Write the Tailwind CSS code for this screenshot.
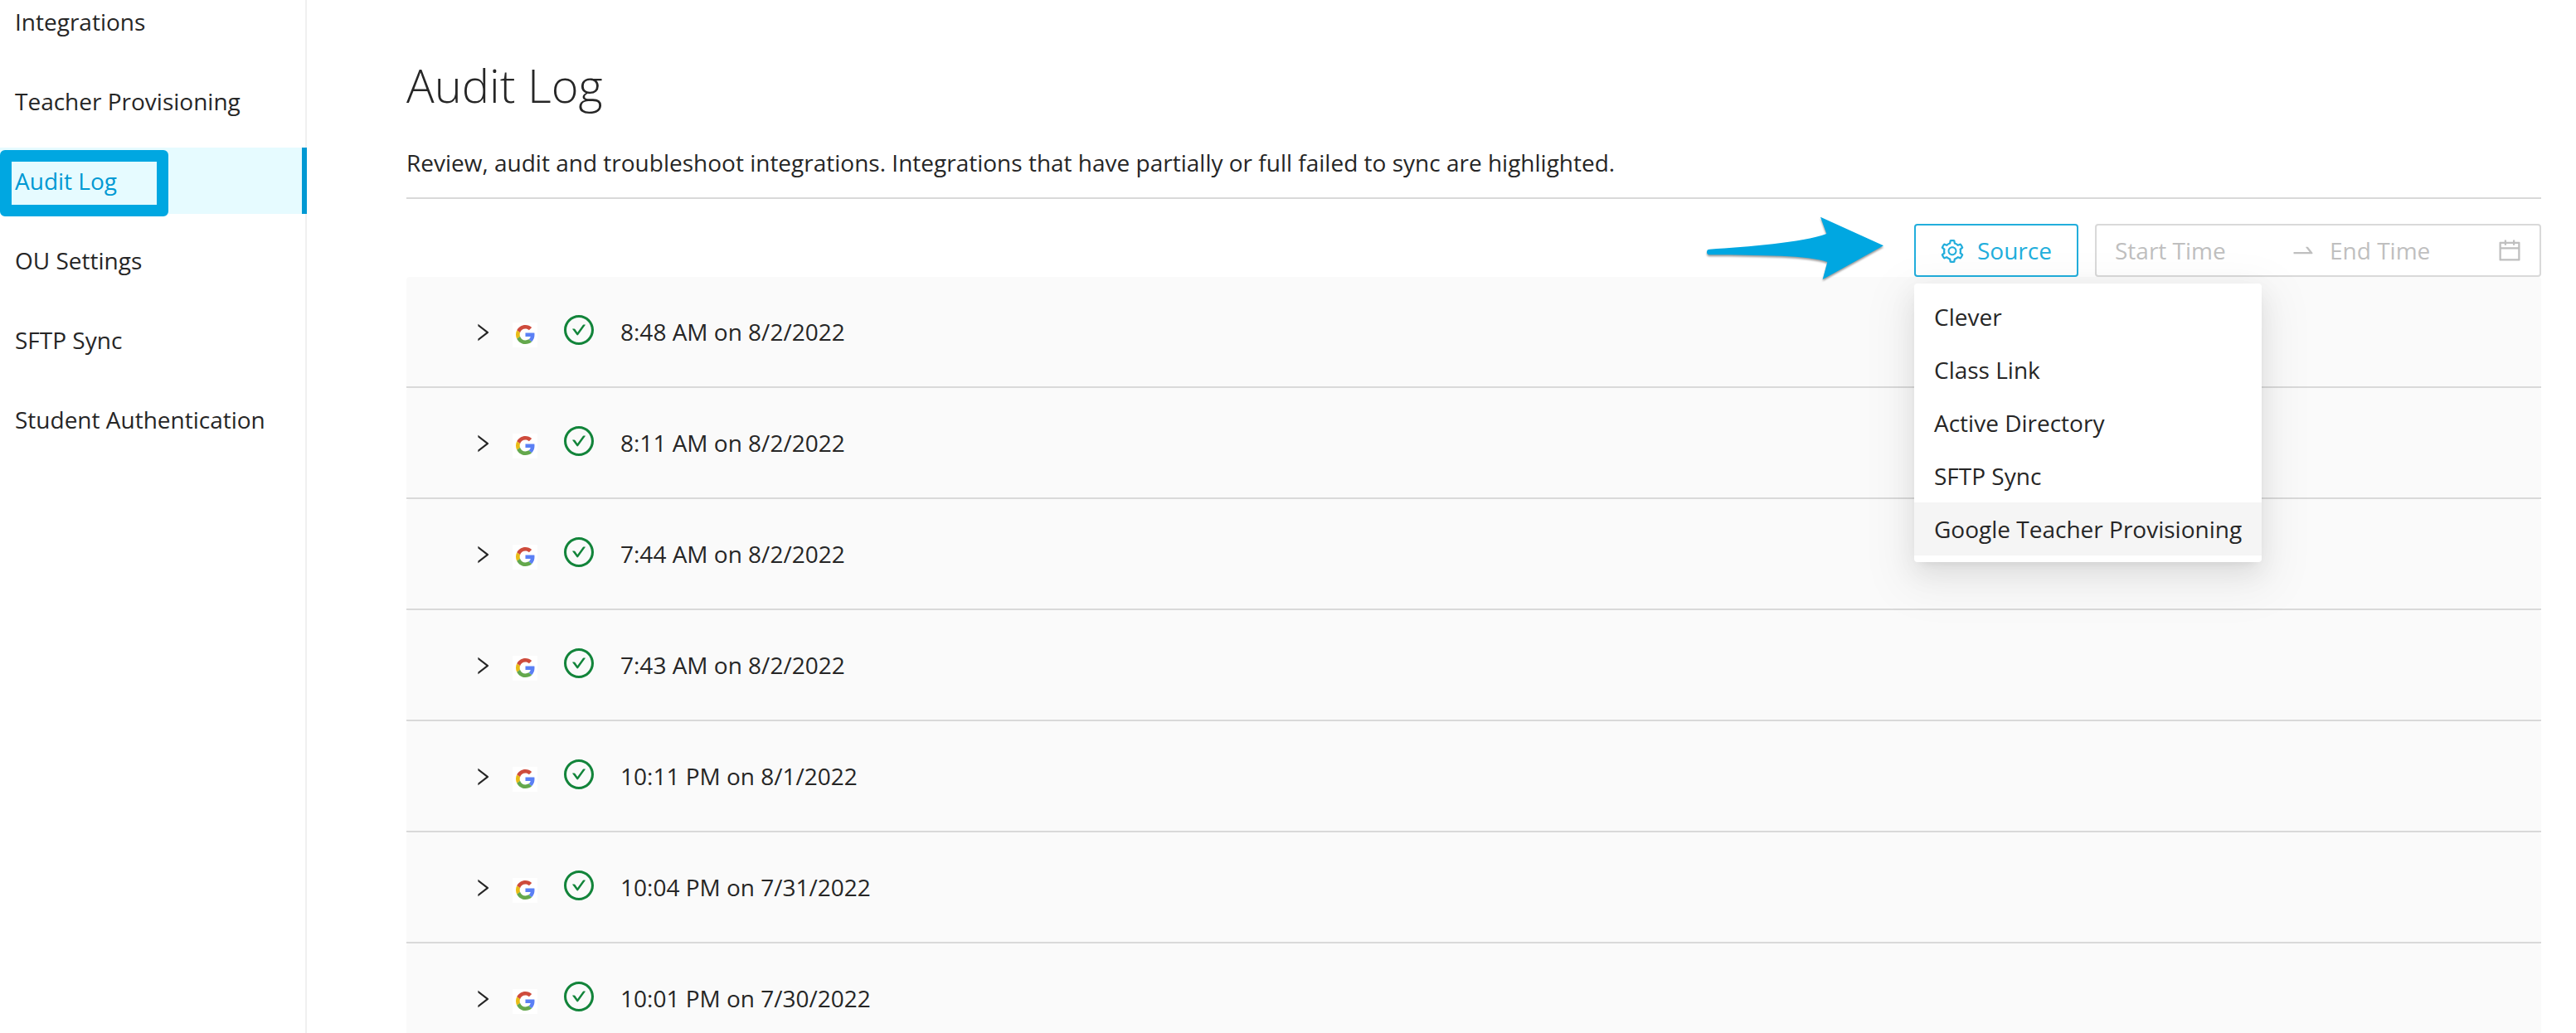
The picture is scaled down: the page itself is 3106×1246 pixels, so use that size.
<!DOCTYPE html>
<html lang="en">
<head>
  <meta charset="UTF-8" />
  <meta name="viewport" content="width=device-width, initial-scale=1.0"/>
  <title>Audit Log</title>
  <script src="https://cdn.jsdelivr.net/npm/@tailwindcss/browser@4"></script>
</head>
<body class="bg-white h-screen overflow-hidden font-['Open_Sans',sans-serif] text-[28px] leading-[44px] text-[#262626]">
  <div class="flex h-full">
    <!-- Side menu -->
    <nav class="w-[370px] shrink-0 border-r-2 border-[#f0f0f0]">
      <ul class="-mt-[14px] flex flex-col gap-4 leading-[80px] whitespace-nowrap">
        <li class="h-20 pl-[18px]">Integrations</li>
        <li class="h-20 pl-[18px]">Teacher Provisioning</li>
        <li class="relative h-20 pl-[18px] -mr-[2px] border-r-6 border-[#0099d3] bg-[#e6fbff] text-[#0099d3]">
          Audit Log
          <div class="absolute left-0 top-[3px] w-[203px] h-20 border-14 border-[#00a7e1] rounded-md"></div>
        </li>
        <li class="h-20 pl-[18px]">OU Settings</li>
        <li class="h-20 pl-[18px]">SFTP Sync</li>
        <li class="h-20 pl-[18px]">Student Authentication</li>
      </ul>
    </nav>

    <main class="flex-1 pl-[120px] pr-[42px]">
      <h1 class="pt-[66px] text-[56px] leading-[72px] font-light">Audit Log</h1>
      <p class="mt-[36px] h-[66px] border-b-2 border-[#d9d9d9]">Review, audit and troubleshoot integrations. Integrations that have partially or full failed to sync are highlighted.</p>

      <!-- Filters -->
      <div class="relative mt-[30px] flex justify-end gap-5">
        <svg class="absolute left-[1560px] -top-[15px] z-20 drop-shadow-[0_2px_1px_rgba(0,0,0,0.4)]" width="230" height="90" viewBox="30 75 690 270" fill="#00a7e1">
          <path d="M64 212C200 203 400 188 487 156L465 95L693 199L473 321L490 258C420 234 260 234 64 232A10 10 0 0 1 64 212Z"/>
        </svg>
        <div class="relative">
          <button class="flex items-center w-[198px] h-16 pl-[30px] border-2 border-[#22aedc] rounded text-[#22aedc]">
            <svg class="mt-[2px] mr-4" width="28" height="28" viewBox="64 64 896 896" fill="currentColor">
              <path d="M924.8 625.7l-65.5-56c3.1-19 4.7-38.4 4.7-57.8s-1.6-38.8-4.7-57.8l65.5-56a32.03 32.03 0 009.3-35.2l-.9-2.6a443.74 443.74 0 00-79.7-137.9l-1.8-2.1a32.12 32.12 0 00-35.1-9.5l-81.3 28.9c-30-24.6-63.5-44-99.7-57.6l-15.7-85a32.05 32.05 0 00-25.8-25.7l-2.7-.5c-52.1-9.4-106.9-9.4-159 0l-2.7.5a32.05 32.05 0 00-25.8 25.7l-15.8 85.4a351.86 351.86 0 00-99 57.4l-81.9-29.1a32 32 0 00-35.1 9.5l-1.8 2.1a446.02 446.02 0 00-79.7 137.9l-.9 2.6c-4.5 12.5-.8 26.5 9.3 35.2l66.3 56.6c-3.1 18.8-4.6 38-4.6 57.1 0 19.2 1.5 38.4 4.6 57.1L99 625.5a32.03 32.03 0 00-9.3 35.2l.9 2.6c18.1 50.4 44.9 96.9 79.7 137.9l1.8 2.1a32.12 32.12 0 0035.1 9.5l81.9-29.1c29.8 24.5 63.1 43.9 99 57.4l15.8 85.4a32.05 32.05 0 0025.8 25.7l2.7.5a449.4 449.4 0 00159 0l2.7-.5a32.05 32.05 0 0025.8-25.7l15.7-85a350 350 0 0099.7-57.6l81.3 28.9a32 32 0 0035.1-9.5l1.8-2.1c34.8-41.1 61.6-87.5 79.7-137.9l.9-2.6c4.5-12.3.8-26.3-9.3-35zM788.3 465.9c2.5 15.1 3.8 30.6 3.8 46.1s-1.3 31-3.8 46.1l-6.6 40.1 74.7 63.9a370.03 370.03 0 01-42.6 73.6L721 702.8l-31.4 25.8c-23.9 19.6-50.5 35-79.3 45.8l-38.1 14.3-17.9 97a377.5 377.5 0 01-85 0l-17.9-97.2-37.8-14.5c-28.5-10.8-55-26.2-78.7-45.7l-31.4-25.9-93.4 33.2c-17-22.9-31.2-47.6-42.6-73.6l75.5-64.5-6.5-40c-2.4-14.9-3.7-30.3-3.7-45.5 0-15.3 1.2-30.6 3.7-45.5l6.5-40-75.5-64.5c11.3-26.1 25.6-50.7 42.6-73.6l93.4 33.2 31.4-25.9c23.7-19.5 50.2-34.9 78.7-45.7l37.9-14.3 17.9-97.2c28.1-3.2 56.8-3.2 85 0l17.9 97 38.1 14.3c28.7 10.8 55.4 26.2 79.3 45.8l31.4 25.8 92.8-32.9c17 22.9 31.2 47.6 42.6 73.6L781.8 426l6.5 39.9zM512 326c-97.2 0-176 78.8-176 176s78.8 176 176 176 176-78.8 176-176-78.8-176-176-176zm79.2 255.2A111.6 111.6 0 01512 614c-29.9 0-58-11.7-79.2-32.8A111.6 111.6 0 01400 502c0-29.9 11.7-58 32.8-79.2C454 401.6 482.1 390 512 390c29.9 0 58 11.6 79.2 32.8A111.6 111.6 0 01624 502c0 29.9-11.7 58-32.8 79.2z"/>
            </svg>
            Source
          </button>
          <!-- Source dropdown -->
          <ul class="absolute left-0 top-[72px] z-10 w-[419px] py-2 bg-white rounded whitespace-nowrap leading-[64px] shadow-[0_6px_12px_-8px_rgba(0,0,0,0.12),0_12px_32px_0_rgba(0,0,0,0.08),0_18px_56px_16px_rgba(0,0,0,0.05)]">
            <li class="h-16 px-6">Clever</li>
            <li class="h-16 px-6">Class Link</li>
            <li class="h-16 px-6">Active Directory</li>
            <li class="h-16 px-6">SFTP Sync</li>
            <li class="h-16 px-6 bg-[#f5f5f5]">Google Teacher Provisioning</li>
          </ul>
        </div>
        <div class="flex items-center w-[538px] h-16 px-[22px] border-2 border-[#d9d9d9] rounded bg-white text-[#bfbfbf]">
          <span class="w-[211px]">Start Time</span>
          <svg width="32" height="32" viewBox="0 0 1024 1024" fill="currentColor">
            <path d="M873.1 596.2l-164-208A32 32 0 00684 376h-64.8c-6.7 0-10.4 7.7-6.3 13l144.3 183H152c-4.4 0-8 3.6-8 8v60c0 4.4 3.6 8 8 8h695.9c26.8 0 41.7-30.8 25.2-51.8z"/>
          </svg>
          <span class="ml-4 flex-1">End Time</span>
          <svg width="28" height="28" viewBox="64 64 896 896" fill="currentColor">
            <path d="M880 184H712v-64c0-4.4-3.6-8-8-8h-56c-4.4 0-8 3.6-8 8v64H384v-64c0-4.4-3.6-8-8-8h-56c-4.4 0-8 3.6-8 8v64H144c-17.7 0-32 14.3-32 32v664c0 17.7 14.3 32 32 32h736c17.7 0 32-14.3 32-32V216c0-17.7-14.3-32-32-32zm-40 656H184V460h656v380zM184 392V256h128v48c0 4.4 3.6 8 8 8h56c4.4 0 8-3.6 8-8v-48h256v48c0 4.4 3.6 8 8 8h56c4.4 0 8-3.6 8-8v-48h128v136H184z"/>
          </svg>
        </div>
      </div>

      <div id="logList"></div>
    </main>
  </div>

  <script>
    const logList = document.getElementById("logList");

    const logs = [
      "8:48 AM on 8/2/2022",
      "8:11 AM on 8/2/2022",
      "7:44 AM on 8/2/2022",
      "7:43 AM on 8/2/2022",
      "10:11 PM on 8/1/2022",
      "10:04 PM on 7/31/2022",
      "10:01 PM on 7/30/2022"
    ];

    logs.forEach(addLogRow);

    function addLogRow(time) {
      const row = document.createElement("div");
      row.className = "border-b-2 border-[#d9d9d9]";
      row.innerHTML = `
        <div class="flex items-start h-[132px] pl-20 pt-[44px] bg-[#fafafa] rounded-t">
          <svg class="mt-[11px]" width="24" height="24" viewBox="64 64 896 896" fill="currentColor">
            <path d="M765.7 486.8L314.9 134.7A7.97 7.97 0 00302 141v77.3c0 4.9 2.3 9.6 6.1 12.6l360 281.1-360 281.1c-3.9 3-6.1 7.7-6.1 12.6V883c0 6.7 7.7 10.4 12.9 6.3l450.8-352.1a31.96 31.96 0 000-50.4z"/>
          </svg>
          <span class="mt-[11px] ml-6 w-[30px] h-[30px] pt-[3px] pl-[4px] bg-white">
            <svg width="23" height="23" viewBox="0 0 48 48">
              <path fill="#ce4b3c" d="M24 9.5c3.54 0 6.71 1.22 9.21 3.6l6.85-6.85C35.9 2.38 30.47 0 24 0 14.62 0 6.51 5.38 2.56 13.22l7.98 6.19C12.43 13.72 17.74 9.5 24 9.5z"/>
              <path fill="#5b80f5" d="M46.98 24.55c0-1.57-.15-3.09-.38-4.55H24v9.02h12.94c-.58 2.96-2.26 5.48-4.78 7.18l7.73 6c4.51-4.18 7.09-10.36 7.09-17.65z"/>
              <path fill="#e9bc14" d="M10.53 28.59c-.48-1.45-.76-2.99-.76-4.59s.27-3.14.76-4.59l-7.98-6.19C.92 16.46 0 20.12 0 24c0 3.88.92 7.54 2.56 10.78l7.97-6.19z"/>
              <path fill="#64a84c" d="M24 48c6.48 0 11.93-2.13 15.89-5.81l-7.73-6c-2.15 1.45-4.92 2.3-8.16 2.3-6.26 0-11.57-4.22-13.47-9.91l-7.98 6.19C6.51 42.62 14.62 48 24 48z"/>
            </svg>
          </span>
          <svg class="mt-[2px] ml-8 text-[#12843a]" width="36" height="36" viewBox="64 64 896 896" fill="currentColor">
            <path d="M699 353h-46.9c-10.2 0-19.9 4.9-25.9 13.3L469 584.3l-71.2-98.8c-6-8.3-15.6-13.3-25.9-13.3H325c-6.5 0-10.3 7.4-6.5 12.7l124.6 172.8a31.8 31.8 0 0051.7 0l210.6-292c3.9-5.3.1-12.7-6.4-12.7z"/>
            <path d="M512 64C264.6 64 64 264.6 64 512s200.6 448 448 448 448-200.6 448-448S759.4 64 512 64zm0 820c-205.4 0-372-166.6-372-372s166.6-372 372-372 372 166.6 372 372-166.6 372-372 372z"/>
          </svg>
          <span class="ml-8">${time}</span>
        </div>
      `;
      logList.appendChild(row);
    }
  </script>
</body>
</html>
